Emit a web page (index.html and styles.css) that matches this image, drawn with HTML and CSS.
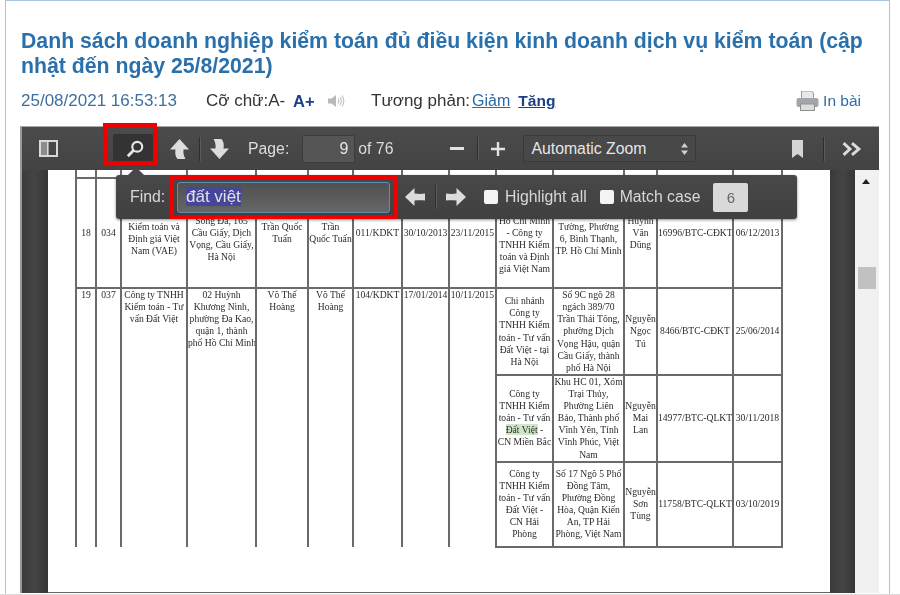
FILE: index.html
```html
<!DOCTYPE html>
<html lang="vi">
<head>
<meta charset="utf-8">
<title>Danh sách doanh nghiệp kiểm toán</title>
<link rel="stylesheet" href="styles.css">
</head>
<body>
<div class="frame">
  <h1 class="title">Danh sách doanh nghiệp kiểm toán đủ điều kiện kinh doanh dịch vụ kiểm toán (cập nhật đến ngày 25/8/2021)</h1>
  <div class="meta">
    <span class="date">25/08/2021 16:53:13</span>
    <span class="size">Cỡ chữ:A-</span>
    <b class="plus">A+</b>
    <svg class="speaker" viewBox="0 0 17 14"><path d="M0 4.5h3.5L8 1v12L3.5 9.5H0z" fill="#b9b9b9"/><path d="M10 4.5q1.6 2.5 0 5M12 3q2.6 4 0 8M14 1.5q3.6 5.5 0 11" fill="none" stroke="#c4c4c4" stroke-width="1.2"/></svg>
    <span class="contrast">Tương phản:<a class="link">Giảm</a><a class="link strong">Tăng</a></span>
    <span class="print">
      <svg class="printer" viewBox="0 0 23 20"><path d="M5.5 0h10l2 2v6h-12z" fill="#e8e8e8" stroke="#9a9a9a"/><rect x="0.5" y="7" width="22" height="9" rx="2" fill="#a2a6aa"/><rect x="4.5" y="13" width="14" height="6.5" fill="#dcdcdc" stroke="#8f8f8f"/></svg>
      In bài
    </span>
  </div>

  <div class="viewer">
    <div class="toolbar">
      <svg class="ic sidebar" viewBox="0 0 19 17"><rect x="1" y="1" width="17" height="15" fill="none" stroke="#d9d9d9" stroke-width="2"/><rect x="2" y="2" width="6" height="13" fill="#8c8c8c"/><rect x="8" y="2" width="1.6" height="13" fill="#d9d9d9"/></svg>
      <span class="searchbtn">
        <svg class="ic" viewBox="0 0 20 20"><circle cx="12.5" cy="7.5" r="5.5" fill="none" stroke="#e6e6e6" stroke-width="2.4"/><path d="M8.5 11.5L2 18" stroke="#e6e6e6" stroke-width="3.2"/></svg>
      </span>
      <svg class="ic updown up" viewBox="0 0 19 20"><path d="M9.5 0L19 10.5h-5.5c-.5 4 .5 7 2 9.5H7.5C5 17 5 14 5.5 10.5H0z" fill="#dcdcdc"/></svg>
      <i class="sep s1"></i>
      <svg class="ic updown" viewBox="0 0 19 20"><path d="M9.5 20L0 9.5h5.5C6 5.500 5 2.500 3.500 0h8C14 3 14 6 13.500 9.500H19z" fill="#dcdcdc"/></svg>
      <span class="tlabel pagelabel">Page:</span>
      <span class="pageinput">9</span>
      <span class="tlabel of">of 76</span>
      <span class="minus"></span>
      <i class="sep s2"></i>
      <svg class="ic zoomplus" viewBox="0 0 14 14"><path d="M7 0v14M0 7h14" stroke="#e2e2e2" stroke-width="2.400"/></svg>
      <span class="zoomselect">Automatic Zoom
        <svg class="updownarrows" viewBox="0 0 7 12"><path d="M3.500 0L7 4.500H0zM3.500 12L0 7.500h7z" fill="#d0d0d0"/></svg>
      </span>
      <svg class="ic bookmark" viewBox="0 0 11 18"><path d="M0 0h11v18l-5.500-4L0 18z" fill="#d4d4d4"/></svg>
      <i class="sep s3"></i>
      <svg class="ic chevrons" viewBox="0 0 19 13"><path d="M1.500 1l6 5.500-6 5.500M9.500 1l6.500 5.500-6.500 5.500" fill="none" stroke="#dcdcdc" stroke-width="2.800"/></svg>
    </div>

    <div class="workspace">
      <div class="gutter left"></div>
      <div class="page">
        <table class="sheet">
          <colgroup>
            <col class="c1"><col class="c2"><col class="c3"><col class="c4"><col class="c5"><col class="c6"><col class="c7"><col class="c8"><col class="c9"><col class="c10"><col class="c11"><col class="c12"><col class="c13"><col class="c14">
          </colgroup>
          <tr class="stub"><td></td><td></td><td></td><td></td><td></td><td></td><td></td><td></td><td></td><td></td><td></td><td></td><td></td><td></td></tr>
          <tr class="r18">
            <td>18</td><td>034</td>
            <td>&nbsp;<br>Kiểm toán và<br>Định giá Việt<br>Nam (VAE)</td>
            <td>&nbsp;<br>Sông Đà, 165<br>Cầu Giấy, Dịch<br>Vọng, Cầu Giấy,<br>Hà Nội</td>
            <td>Trần Quốc<br>Tuấn</td>
            <td>Trần<br>Quốc Tuấn</td>
            <td>011/KDKT</td><td>30/10/2013</td><td>23/11/2015</td>
            <td>&nbsp;<br>&nbsp;<br>Hồ Chí Minh<br>- Công ty<br>TNHH Kiểm<br>toán và Định<br>giá Việt Nam</td>
            <td>&nbsp;<br>Tường, Phường<br>6, Bình Thạnh,<br>TP. Hồ Chí Minh</td>
            <td>Huỳnh<br>Văn<br>Dũng</td>
            <td>16996/BTC-CĐKT</td><td>06/12/2013</td>
          </tr>
          <tr class="r19a">
            <td class="open" rowspan="3">19</td><td class="open" rowspan="3">037</td>
            <td class="open" rowspan="3">Công ty TNHH<br>Kiểm toán - Tư<br>vấn Đất Việt</td>
            <td class="open" rowspan="3">02 Huỳnh<br>Khương Ninh,<br>phường Đa Kao,<br>quận 1, thành<br>phố Hồ Chí Minh</td>
            <td class="open" rowspan="3">Võ Thế<br>Hoàng</td>
            <td class="open" rowspan="3">Võ Thế<br>Hoàng</td>
            <td class="open" rowspan="3">104/KDKT</td><td class="open" rowspan="3">17/01/2014</td><td class="open" rowspan="3">10/11/2015</td>
            <td>Chi nhánh<br>Công ty<br>TNHH Kiểm<br>toán - Tư vấn<br>Đất Việt - tại<br>Hà Nội</td>
            <td>Số 9C ngõ 28<br>ngách 389/70<br>Trần Thái Tông,<br>phường Dịch<br>Vọng Hậu, quận<br>Cầu Giấy, thành<br>phố Hà Nội</td>
            <td>Nguyễn<br>Ngọc<br>Tú</td>
            <td>8466/BTC-CĐKT</td><td>25/06/2014</td>
          </tr>
          <tr class="r19b">
            <td>Công ty<br>TNHH Kiểm<br>toán - Tư vấn<br><mark class="hit">Đất Việt</mark> -<br>CN Miền Bắc</td>
            <td>Khu HC 01, Xóm<br>Trại Thủy,<br>Phường Liên<br>Bảo, Thành phố<br>Vĩnh Yên, Tỉnh<br>Vĩnh Phúc, Việt<br>Nam</td>
            <td>Nguyễn<br>Mai<br>Lan</td>
            <td>14977/BTC-QLKT</td><td>30/11/2018</td>
          </tr>
          <tr class="r19c">
            <td>Công ty<br>TNHH Kiểm<br>toán - Tư vấn<br>Đất Việt -<br>CN Hải<br>Phòng</td>
            <td>Số 17 Ngõ 5 Phố<br>Đồng Tâm,<br>Phường Đồng<br>Hòa, Quận Kiến<br>An, TP Hải<br>Phòng, Việt Nam</td>
            <td>Nguyễn<br>Sơn<br>Tùng</td>
            <td>11758/BTC-QLKT</td><td>03/10/2019</td>
          </tr>
        </table>
      </div>
      <div class="gutter right"></div>
      <div class="scrollbar">
        <span class="scrollup"></span>
        <span class="thumb"></span>
      </div>
    </div>

    <div class="findbar">
      <span class="findlabel">Find:</span>
      <span class="findinput"><span class="selected">đất việt</span></span>
      <svg class="ic findarrow" viewBox="0 0 20 18"><path d="M0 9L9.500 0v5.500c3.500.5 7 .5 10.500 0v7c-3.500-.5-7-.5-10.500 0V18z" fill="#dcdcdc"/></svg>
      <i class="sep s4"></i>
      <svg class="ic findarrow" viewBox="0 0 20 18"><path d="M20 9L10.500 0v5.500c-3.500.5-7 .5-10.500 0v7c3.500-.5 7-.5 10.500 0V18z" fill="#dcdcdc"/></svg>
      <span class="check first"></span><span class="flabel">Highlight all</span>
      <span class="check"></span><span class="flabel">Match case</span>
      <span class="count">6</span>
    </div>
    <span class="mark markbtn"></span>
    <span class="mark markinput"></span>
  </div>
</div>
</body>
</html>
```

FILE: styles.css
```css
* { box-sizing: border-box; }
html, body { margin: 0; padding: 0; background: #fff; }
body { width: 900px; height: 595px; overflow: hidden; font-family: "Liberation Sans", Arial, sans-serif; border-bottom: 1px solid #dcdcdc; }

.frame {
  margin-left: 5px;
  width: 885px;
  height: 594px;
  border: 1.500px solid #a9c3dc;
  border-bottom: 0;
  padding: 0 10px 0 14px;
  filter: blur(0.35px);
  overflow: hidden;
}

.title {
  margin: 28px 0 0 1px;
  font-size: 21.250px;
  line-height: 25px;
  font-weight: 700;
  color: #2a70ab;
  width: 856px;
}

.meta {
  display: flex;
  align-items: center;
  height: 24px;
  margin: 10px 0 0 1px;
  font-size: 17px;
  color: #333;
}
.date { color: #3f6f9e; width: 185px; }
.size { width: 87px; }
.plus { color: #1c3f86; width: 35px; font-size: 16.500px; }
.speaker { width: 17px; height: 14px; margin-right: 26px; }
.contrast { white-space: nowrap; }
.link { color: #2b6ba3; text-decoration: underline; font-size: 16px; margin-left: 2px; }
.strong { color: #1c3f86; font-weight: 700; margin-left: 8px; font-size: 15.500px; }
.print { margin-left: auto; margin-right: 18px; display: flex; align-items: center; gap: 4px; color: #2f6ea5; font-size: 15.500px; }
.printer { width: 23px; height: 20px; }

.viewer {
  position: relative;
  margin-top: 13px;
  width: 859px;
  height: 468px;
  border-top: 1.500px solid #a8a8a8;
}

.toolbar {
  display: flex;
  align-items: center;
  height: 43px;
  padding-left: 19px;
  background: linear-gradient(#4b4b4b, #434343);
  color: #dcdcdc;
  font-size: 15.800px;
  box-shadow: inset 2px 0 0 #999;
}
.ic { display: block; flex: none; }
.sidebar { width: 19px; height: 17px; }
.searchbtn {
  width: 40px;
  height: 30px;
  margin-left: 55px;
  background: #333;
  border-radius: 2px;
  display: flex;
  align-items: center;
  justify-content: center;
}
.searchbtn .ic { width: 18px; height: 18px; margin-left: 3px; }
.updown { width: 19px; height: 20px; }
.up { margin-left: 17px; }
.sep { display: block; flex: none; width: 1px; height: 24px; background: #2e2e2e; box-shadow: 1px 0 0 #5c5c5c; }
.s1 { margin: 0 10px 0 10px; }
.tlabel { white-space: nowrap; }
.pagelabel { margin-left: 19px; }
.pageinput {
  width: 53px;
  height: 28px;
  margin-left: 13px;
  padding-right: 6px;
  background: #555;
  border: 1px solid #3c3c3c;
  border-radius: 2px;
  text-align: right;
  line-height: 26px;
  color: #e6e6e6;
  font-size: 16px;
}
.of { margin-left: 3px; }
.minus { width: 14px; height: 2.500px; background: #e2e2e2; margin-left: 57px; }
.s2 { margin: 0 13px; }
.zoomplus { width: 14px; height: 14px; }
.zoomselect {
  position: relative;
  width: 173px;
  height: 27px;
  margin-left: 18px;
  padding-left: 7px;
  line-height: 25px;
  background: #484848;
  border: 1px solid #393939;
  border-radius: 2px;
  color: #e6e6e6;
  font-size: 15.800px;
}
.updownarrows { position: absolute; right: 7px; top: 7px; width: 7px; height: 12px; }
.bookmark { width: 11px; height: 18px; margin-left: 96px; }
.s3 { margin: 0 18px 0 20px; }
.chevrons { width: 20px; height: 14px; }

.workspace { display: flex; height: 423px; }
.gutter { flex: none; background: linear-gradient(90deg, #3a3a3a, #444 50%, #363636); }
.gutter.left { width: 28px; box-shadow: inset 2px 0 0 #999; }
.gutter.right { width: 25px; }
.page {
  flex: none;
  width: 781.500px;
  padding-left: 27px;
  background: #fff;
  overflow: hidden;
  border-bottom: 1.500px solid #666;
}
.scrollbar { position: relative; flex: 1; background: #f1f1f1; }
.scrollup {
  position: absolute;
  left: 7.500px;
  top: 9px;
  border-left: 4.500px solid transparent;
  border-right: 4.500px solid transparent;
  border-bottom: 5px solid #222;
}
.thumb { position: absolute; left: 3px; top: 97px; width: 18px; height: 22px; background: #c1c1c1; }

.sheet {
  border-collapse: collapse;
  table-layout: fixed;
  width: 706px;
  font-family: "Liberation Serif", "Times New Roman", serif;
  font-size: 9.600px;
  line-height: 12.100px;
  color: #2b2b2b;
  text-align: center;
  white-space: nowrap;
}
.sheet td { border: 2px solid #6a6a6a; padding: 0; vertical-align: middle; overflow: hidden; }
.c1 { width: 20px; } .c2 { width: 25px; } .c3 { width: 66px; } .c4 { width: 69px; }
.c5 { width: 52px; } .c6 { width: 45px; } .c7 { width: 49px; } .c8 { width: 47px; }
.c9 { width: 47px; } .c10 { width: 57px; } .c11 { width: 71px; } .c12 { width: 33px; }
.c13 { width: 76px; } .c14 { width: 49px; }
.stub td { border-top: 0; }
.stub { height: 8px; }
.r18 { height: 110px; }
.r19a { height: 87px; }
.r19b { height: 86px; }
.r19c { height: 85px; }
.sheet td.open { vertical-align: top; border-bottom: 0; }
.hit { background: #cfe6c8; color: inherit; }

.findbar {
  position: absolute;
  left: 96px;
  top: 48px;
  width: 681px;
  height: 44px;
  padding-left: 14px;
  display: flex;
  align-items: center;
  background: linear-gradient(#484848, #404040);
  border-radius: 3px;
  color: #d8d8d8;
  font-size: 15.800px;
  box-shadow: 0 1px 3px rgba(0,0,0,.45);
}
.findbar::before {
  content: "";
  position: absolute;
  left: 12px;
  top: -8px;
  border-left: 8px solid transparent;
  border-right: 8px solid transparent;
  border-bottom: 8px solid #484848;
}
.findlabel { width: 47px; }
.findinput {
  width: 213px;
  height: 31px;
  padding-left: 8px;
  line-height: 27px;
  background: linear-gradient(#505050, #666);
  border: 1.500px solid #5f8fb0;
  border-radius: 3px;
  font-size: 17px;
  color: #e2e2e2;
}
.selected { background: #45459c; }
.findarrow { width: 20px; height: 18px; }
.findinput + .findarrow { margin-left: 15px; }
.s4 { margin: 0 10px; }
.check { width: 14px; height: 14px; background: #f4f4f4; border-radius: 2px; flex: none; margin-left: 13px; margin-right: 6px; }
.check.first { margin-left: 18px; margin-right: 7px; }
.flabel { white-space: nowrap; }
.count {
  width: 35px;
  height: 29px;
  margin-left: 13px;
  background: #d9d9d9;
  border-radius: 2px;
  text-align: center;
  line-height: 29px;
  color: #666;
  font-size: 15px;
}

.mark { position: absolute; border: 4px solid #ee0000; }
.markbtn { left: 83px; top: -4px; width: 54px; height: 42px; }
.markinput { left: 150px; top: 49px; width: 228px; height: 43px; }
```
